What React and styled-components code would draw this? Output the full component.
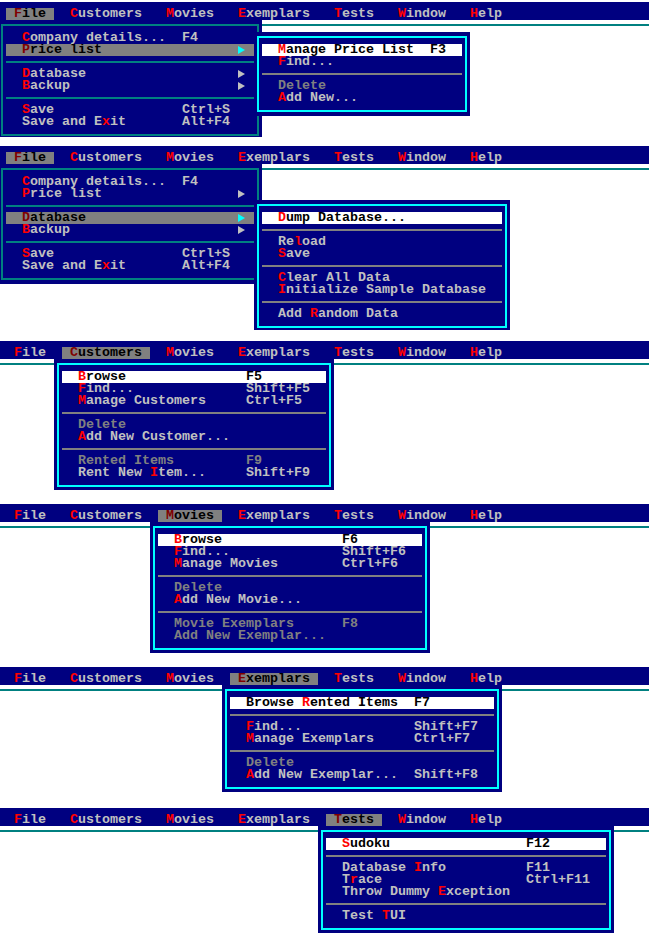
import React from 'react';
import styled, { createGlobalStyle } from 'styled-components';

const NAVY = '#000080';
const SILVER = '#c0c0c0';
const GRAY = '#808080';
const TEAL = '#008080';
const CYAN = '#00ffff';
const RED = '#ff0000';
const MAROON = '#800000';

// one text cell of the console is 8x12 px
const CELL = 8;
const LINE = 12;

const GlobalStyle = createGlobalStyle`
  html, body {
    margin: 0;
    padding: 0;
    background: #fff;
  }
  body {
    font-family: "Liberation Mono", "DejaVu Sans Mono", monospace;
    font-weight: bold;
    font-size: 13.333px;
  }
`;

const Page = styled.div`
  width: 649px;
  display: flex;
  flex-direction: column;
`;

const Screen = styled.section`
  position: relative;
  height: ${p => p.$h}px;
  margin-top: ${p => p.$mt}px;
  overflow: hidden;
  background: #fff;
  display: flex;
  flex-direction: column;
`;

const MenuBar = styled.nav`
  flex: none;
  height: 18px;
  box-sizing: border-box;
  padding: 6px 0 0 6px;
  background: ${NAVY};
  display: flex;
  gap: ${CELL}px;
`;

const palette = {
  normal: { bg: 'transparent', fg: SILVER, hot: RED, arrow: SILVER },
  disabled: { bg: 'transparent', fg: GRAY, hot: GRAY, arrow: GRAY },
  current: { bg: '#ffffff', fg: '#000', hot: RED, arrow: '#000' },
  parked: { bg: GRAY, fg: '#000', hot: MAROON, arrow: CYAN },
};

const BarItem = styled.span`
  height: ${LINE}px;
  line-height: ${LINE}px;
  padding: 0 ${CELL}px;
  white-space: pre;
  background: ${p => palette[p.$state].bg};
  color: ${p => palette[p.$state].fg};
`;

const HotKey = styled.span`
  color: ${p => palette[p.$state].hot};
`;

const Desktop = styled.div`
  flex: 1;
  background: #fff;
`;

const WindowEdge = styled.div`
  margin-top: 4px;
  height: 2px;
  background: ${TEAL};
`;

const Dropdown = styled.div`
  position: absolute;
  left: ${p => p.$col * CELL - 2}px;
  top: ${p => 6 + p.$row * LINE}px;
  width: ${p => p.$cols * CELL}px;
  box-sizing: border-box;
  padding: 4px 3px;
  background: ${NAVY};
`;

const Frame = styled.div`
  border: 2px solid ${p => (p.$active ? CYAN : TEAL)};
  padding: 6px 3px;
`;

const Row = styled.div`
  display: flex;
  height: ${LINE}px;
  line-height: ${LINE}px;
  padding: 0 ${CELL}px 0 ${CELL * 2}px;
  white-space: pre;
  background: ${p => palette[p.$state].bg};
  color: ${p => palette[p.$state].fg};
`;

const Label = styled.span`
  flex: none;
  width: ${p => p.$cols * CELL}px;
`;

const Arrow = styled.span`
  margin-left: auto;
  width: ${CELL}px;
  height: ${LINE}px;
  display: flex;
  align-items: center;
  color: ${p => palette[p.$state].arrow};

  &::before {
    content: '';
    border-left: 7px solid currentColor;
    border-top: 4px solid transparent;
    border-bottom: 4px solid transparent;
  }
`;

const Separator = styled.div`
  height: 2px;
  margin: 5px 0;
  background: ${p => (p.$active ? GRAY : TEAL)};
`;

function Hot({ text, state }) {
  return text.split('~').map((part, i) =>
    i % 2 ? <HotKey key={i} $state={state}>{part}</HotKey> : part
  );
}

const BAR = ['~F~ile', '~C~ustomers', '~M~ovies', '~E~xemplars', '~T~ests', '~W~indow', '~H~elp'];

const SEP = { sep: true };

const fileItems = sel => [
  { t: '~C~ompany details...', k: 'F4' },
  { t: '~P~rice list', sub: true, sel: sel === 'price' },
  SEP,
  { t: '~D~atabase', sub: true, sel: sel === 'db' },
  { t: '~B~ackup', sub: true },
  SEP,
  { t: '~S~ave', k: 'Ctrl+S' },
  { t: 'Save and E~x~it', k: 'Alt+F4' },
];

const SCREENS = [
  {
    mt: 2, h: 135, open: 0,
    menus: [
      { col: 0, row: 1, cols: 33, keyCol: 20, items: fileItems('price') },
      {
        col: 32, row: 2, cols: 27, keyCol: 19, active: true,
        items: [
          { t: '~M~anage Price List', k: 'F3', sel: true },
          { t: '~F~ind...' },
          SEP,
          { t: 'Delete', dis: true },
          { t: '~A~dd New...' },
        ],
      },
    ],
  },
  {
    mt: 9, h: 184, open: 0,
    menus: [
      { col: 0, row: 1, cols: 33, keyCol: 20, items: fileItems('db') },
      {
        col: 32, row: 4, cols: 32, keyCol: 28, active: true,
        items: [
          { t: '~D~ump Database...', sel: true },
          SEP,
          { t: 'Re~l~oad' },
          { t: '~S~ave' },
          SEP,
          { t: '~C~lear All Data' },
          { t: '~I~nitialize Sample Database' },
          SEP,
          { t: 'Add ~R~andom Data' },
        ],
      },
    ],
  },
  {
    mt: 11, h: 149, open: 1,
    menus: [
      {
        col: 7, row: 1, cols: 35, keyCol: 21, active: true,
        items: [
          { t: '~B~rowse', k: 'F5', sel: true },
          { t: '~F~ind...', k: 'Shift+F5' },
          { t: '~M~anage Customers', k: 'Ctrl+F5' },
          SEP,
          { t: 'Delete', dis: true },
          { t: '~A~dd New Customer...' },
          SEP,
          { t: 'Rented Items', k: 'F9', dis: true },
          { t: 'Rent New ~I~tem...', k: 'Shift+F9' },
        ],
      },
    ],
  },
  {
    mt: 14, h: 149, open: 2,
    menus: [
      {
        col: 19, row: 1, cols: 35, keyCol: 21, active: true,
        items: [
          { t: '~B~rowse', k: 'F6', sel: true },
          { t: '~F~ind...', k: 'Shift+F6' },
          { t: '~M~anage Movies', k: 'Ctrl+F6' },
          SEP,
          { t: 'Delete', dis: true },
          { t: '~A~dd New Movie...' },
          SEP,
          { t: 'Movie Exemplars', k: 'F8', dis: true },
          { t: 'Add New Exemplar...', dis: true },
        ],
      },
    ],
  },
  {
    mt: 14, h: 125, open: 3,
    menus: [
      {
        col: 28, row: 1, cols: 35, keyCol: 21, active: true,
        items: [
          { t: 'Browse ~R~ented Items', k: 'F7', sel: true },
          SEP,
          { t: '~F~ind...', k: 'Shift+F7' },
          { t: '~M~anage Exemplars', k: 'Ctrl+F7' },
          SEP,
          { t: 'Delete', dis: true },
          { t: '~A~dd New Exemplar...', k: 'Shift+F8' },
        ],
      },
    ],
  },
  {
    mt: 16, h: 125, open: 4,
    menus: [
      {
        col: 40, row: 1, cols: 37, keyCol: 23, active: true,
        items: [
          { t: '~S~udoku', k: 'F12', sel: true },
          SEP,
          { t: 'Database ~I~nfo', k: 'F11' },
          { t: 'T~r~ace', k: 'Ctrl+F11' },
          { t: 'Throw Dummy ~E~xception' },
          SEP,
          { t: 'Test ~T~UI' },
        ],
      },
    ],
  },
];

function rowState(item, active) {
  if (item.dis) return 'disabled';
  if (item.sel) return active ? 'current' : 'parked';
  return 'normal';
}

function Menu({ col, row, cols, keyCol, active, items }) {
  return (
    <Dropdown $col={col} $row={row} $cols={cols}>
      <Frame $active={active}>
        {items.map((it, i) => {
          if (it.sep) return <Separator key={i} $active={active} />;
          const state = rowState(it, active);
          return (
            <Row key={i} $state={state}>
              <Label $cols={keyCol}>
                <Hot text={it.t} state={state} />
              </Label>
              {it.k && <span>{it.k}</span>}
              {it.sub && <Arrow $state={state} />}
            </Row>
          );
        })}
      </Frame>
    </Dropdown>
  );
}

export default function App() {
  return (
    <Page>
      <GlobalStyle />
      {SCREENS.map((s, i) => (
        <Screen key={i} $h={s.h} $mt={s.mt}>
          <MenuBar>
            {BAR.map((name, j) => {
              const state = j === s.open ? 'parked' : 'normal';
              return (
                <BarItem key={j} $state={state}>
                  <Hot text={name} state={state} />
                </BarItem>
              );
            })}
          </MenuBar>
          <Desktop>
            <WindowEdge />
          </Desktop>
          {s.menus.map((m, j) => (
            <Menu key={j} {...m} />
          ))}
        </Screen>
      ))}
    </Page>
  );
}
